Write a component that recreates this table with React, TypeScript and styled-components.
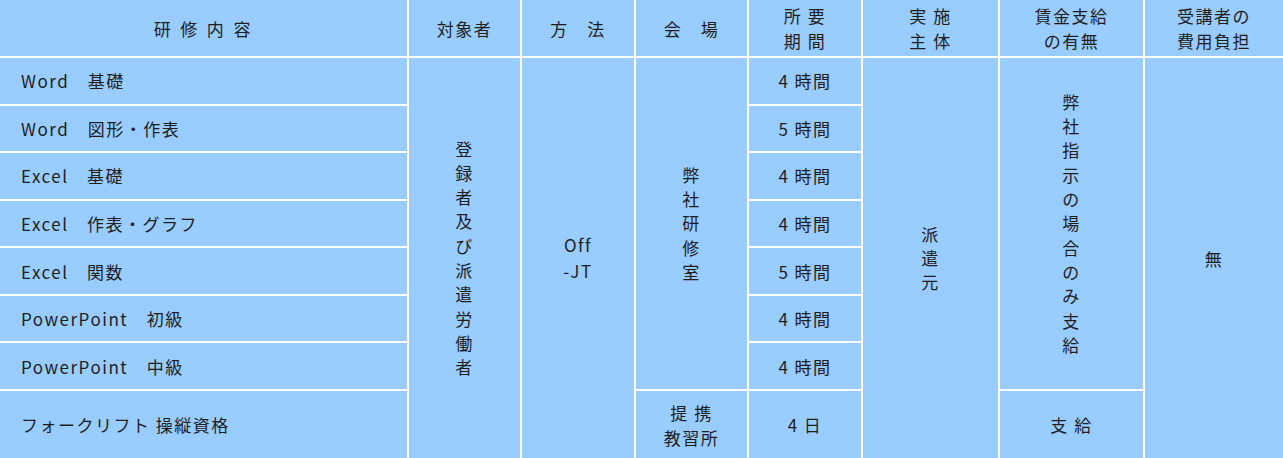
import React from 'react';
import styled, { createGlobalStyle } from 'styled-components';

const GlobalStyle = createGlobalStyle`
  html, body {
    margin: 0;
    padding: 0;
    background: #ffffff;
    overflow: hidden;
  }
`;

const courses = [
  { name: 'Word　基礎', hours: '4 時間' },
  { name: 'Word　図形・作表', hours: '5 時間' },
  { name: 'Excel　基礎', hours: '4 時間' },
  { name: 'Excel　作表・グラフ', hours: '4 時間' },
  { name: 'Excel　関数', hours: '5 時間' },
  { name: 'PowerPoint　初級', hours: '4 時間' },
  { name: 'PowerPoint　中級', hours: '4 時間' },
];

const headers = [
  ['研 修 内 容'],
  ['対象者'],
  ['方　法'],
  ['会　場'],
  ['所 要', '期 間'],
  ['実 施', '主 体'],
  ['賃金支給', 'の有無'],
  ['受講者の', '費用負担'],
];

const Vertical = ({ text }: { text: string }) => (
  <Stack>
    {Array.from(text).map((ch, i) => (
      <span key={i}>{ch}</span>
    ))}
  </Stack>
);

const App = () => {
  return (
    <>
      <GlobalStyle />
      <Table>
        {headers.map((lines, i) => (
          <Cell key={i} $col={i + 1} $row={1} $spread={i === 0}>
            <Lines>
              {lines.map((l) => (
                <span key={l}>{l}</span>
              ))}
            </Lines>
          </Cell>
        ))}

        {courses.map((c, i) => (
          <React.Fragment key={i}>
            <Cell $col={1} $row={i + 2} $left>
              {c.name}
            </Cell>
            <Cell $col={5} $row={i + 2}>
              {c.hours}
            </Cell>
          </React.Fragment>
        ))}

        <Cell $col={1} $row={9} $left>
          フォークリフト 操縦資格
        </Cell>
        <Cell $col={4} $row={9}>
          <Lines>
            <span>提 携</span>
            <span>教習所</span>
          </Lines>
        </Cell>
        <Cell $col={5} $row={9}>
          4 日
        </Cell>
        <Cell $col={7} $row={9}>
          支 給
        </Cell>

        <Cell $col={2} $row={2} $span={8}>
          <Vertical text="登録者及び派遣労働者" />
        </Cell>
        <Cell $col={3} $row={2} $span={8}>
          <Lines $gap={26}>
            <span>Off</span>
            <span>-JT</span>
          </Lines>
        </Cell>
        <Cell $col={4} $row={2} $span={7}>
          <Vertical text="弊社研修室" />
        </Cell>
        <Cell $col={6} $row={2} $span={8}>
          <Vertical text="派遣元" />
        </Cell>
        <Cell $col={7} $row={2} $span={7}>
          <Vertical text="弊社指示の場合のみ支給" />
        </Cell>
        <Cell $col={8} $row={2} $span={8}>
          無
        </Cell>
      </Table>
    </>
  );
};

export default App;

const Table = styled.div`
  display: grid;
  width: 1283px;
  height: 458px;
  grid-template-columns: 407px 111px 112px 111px 112px 135px 143px 138px;
  grid-template-rows: 56px repeat(7, 1fr) 67px;
  gap: 2px;
  background: #ffffff;
  font-family: "Noto Sans CJK JP", "Noto Sans", sans-serif;
  font-size: 17px;
  letter-spacing: 1.5px;
  color: #1e1e1e;
`;

const Cell = styled.div<{
  $col: number;
  $row: number;
  $span?: number;
  $left?: boolean;
  $spread?: boolean;
}>`
  grid-column: ${(p) => p.$col};
  grid-row: ${(p) => p.$row} / span ${(p) => p.$span ?? 1};
  background: #99ccff;
  display: flex;
  align-items: center;
  justify-content: ${(p) => (p.$left ? 'flex-start' : 'center')};
  padding-left: ${(p) => (p.$left ? '21px' : '0')};
  letter-spacing: ${(p) => (p.$spread ? '2.9px' : 'inherit')};
  white-space: pre;
`;

const Lines = styled.div<{ $gap?: number }>`
  display: flex;
  flex-direction: column;
  align-items: center;
  line-height: ${(p) => p.$gap ?? 25}px;
`;

const Stack = styled.div`
  display: flex;
  flex-direction: column;
  align-items: center;
  line-height: 24.3px;
`;
